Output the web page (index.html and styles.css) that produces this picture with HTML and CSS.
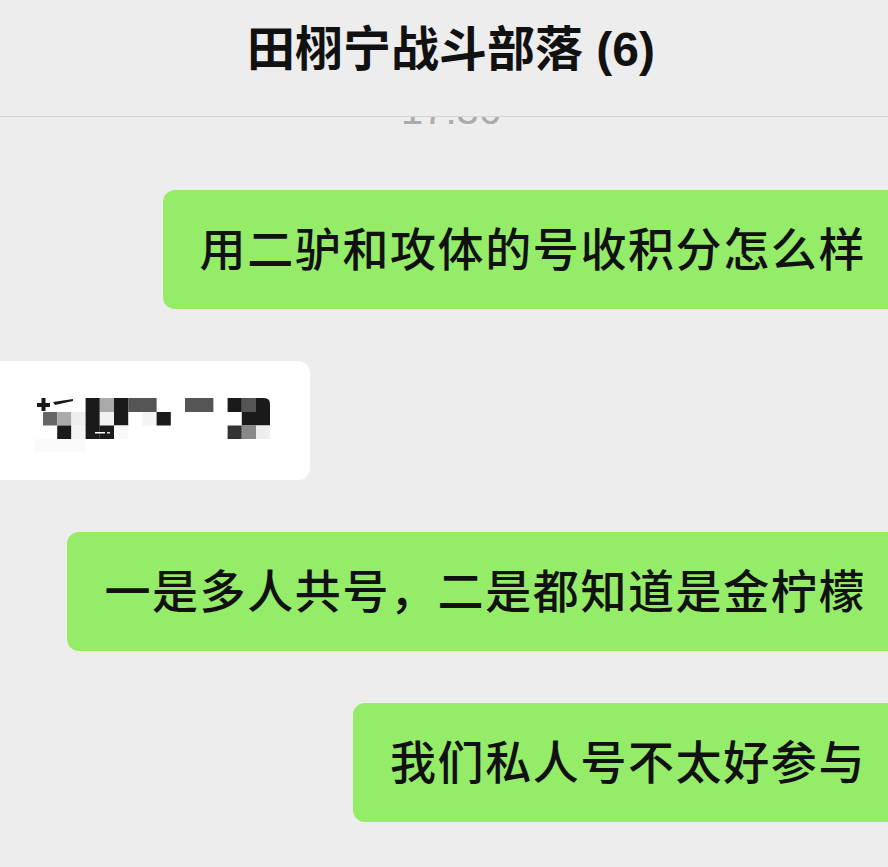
FILE: index.html
```html
<!DOCTYPE html>
<html lang="zh-CN">
  <head>
    <meta charset="UTF-8" />
    <meta name="viewport" content="width=device-width, initial-scale=1.0" />
    <title>田栩宁战斗部落 (6)</title>
    <link rel="stylesheet" href="styles.css">
  </head>
  <body>
    <header class="topbar">
      <h1 class="title">田栩宁战斗部落 (6)</h1>
    </header>

    <div class="chat">
      <!-- timestamp scrolled up under the top bar -->
      <div class="time"><span>17:36</span></div>

      <div class="row me">
        <div class="bubble green">用二驴和攻体的号收积分怎么样</div>
      </div>

      <div class="row other">
        <div class="bubble white">
          <!-- mosaic over the hidden message -->
          <svg class="mosaic" width="240" height="60" viewBox="0 0 240 60">
            <rect x="2" y="8" width="13" height="4" fill="#1a1a1a" />
            <rect x="6.5" y="3" width="4" height="13" fill="#1a1a1a" />
            <path d="M18 7 L38 4 L38 6 L20 10 Z" fill="#1a1a1a" />
            <rect x="8" y="17" width="14.2" height="13.5" fill="#666" />
            <rect x="22.2" y="17" width="14.2" height="13.5" fill="#aaa" />
            <rect x="36.4" y="17" width="14.2" height="13.5" fill="#eee" />
            <rect x="22.2" y="30.5" width="14.2" height="13.5" fill="#1a1a1a" />
            <rect x="36.4" y="30.5" width="14.2" height="13.5" fill="#f4f4f4" />
            <rect x="50.6" y="3" width="14.2" height="41" fill="#1a1a1a" />
            <rect x="64.8" y="3" width="14.2" height="14" fill="#aaa" />
            <rect x="64.8" y="17" width="14.2" height="13.5" fill="#f2f2f2" />
            <rect x="64.8" y="30.5" width="14.2" height="13.5" fill="#1a1a1a" />
            <rect x="60" y="37" width="10" height="1.5" fill="#fff" />
            <rect x="72" y="37" width="3" height="1.5" fill="#ddd" />
            <rect x="79" y="3" width="14.2" height="27.5" fill="#1a1a1a" />
            <rect x="79" y="30.5" width="14.2" height="13.5" fill="#f8f8f8" />
            <rect x="93.2" y="3" width="28.4" height="14" fill="#555" />
            <rect x="107.4" y="17" width="14.2" height="13.5" fill="#f4f4f4" />
            <rect x="121.6" y="17" width="14.2" height="13.5" fill="#1a1a1a" />
            <rect x="150" y="3" width="28.4" height="14" fill="#555" />
            <rect x="192.6" y="3" width="14.2" height="14" fill="#1a1a1a" />
            <rect x="206.8" y="3" width="14.2" height="14" fill="#555" />
            <path d="M221 3 H229 Q235 3 235 9 V30.5 H221 Z" fill="#1a1a1a" />
            <rect x="206.8" y="17" width="14.2" height="13.5" fill="#1a1a1a" />
            <rect x="192.6" y="30.5" width="14.2" height="13.5" fill="#333" />
            <rect x="206.8" y="30.5" width="14.2" height="13.5" fill="#888" />
            <rect x="221" y="30.5" width="14.2" height="13.5" fill="#eee" />
            <rect x="0" y="44" width="50" height="13" fill="#fafafa" />
          </svg>
        </div>
      </div>

      <div class="row me">
        <div class="bubble green">一是多人共号，二是都知道是金柠檬</div>
      </div>

      <div class="row me">
        <div class="bubble green">我们私人号不太好参与</div>
      </div>
    </div>
  </body>
</html>
```

FILE: styles.css
```css
html,
body {
  margin: 0;
  padding: 0;
  overflow: hidden;
}

body {
  background-color: #ededed;
  font-family: "Liberation Sans", "Noto Sans CJK SC", sans-serif;
  color: #111;
}

.topbar {
  height: 117px;
  border-bottom: 1px solid #d4d4d4;
  box-sizing: border-box;
  background-color: #ededed;
}

.title {
  margin: 0;
  padding: 20px 0 0 14px;
  text-align: center;
  font-size: 48px;
  line-height: 60px;
  font-weight: bold;
  color: #111;
}

.chat {
  margin: 0 -24px;
}

.time {
  height: 8px;
  padding-left: 14px;
  overflow: hidden;
  display: flex;
  align-items: flex-end;
  justify-content: center;
}

.time span {
  font-size: 40px;
  line-height: 30px;
  color: #ababab;
}

.row {
  display: flex;
  margin-top: 52px;
}

.row:nth-child(2) {
  margin-top: 65px;
}

.row.me {
  justify-content: flex-end;
}

.row.other {
  justify-content: flex-start;
}

.bubble {
  border-radius: 12px;
  font-size: 46px;
  line-height: 58px;
  letter-spacing: 1.6px;
  font-weight: 500;
}

.bubble.green {
  background-color: #95ec69;
  padding: 31px 46px 30px 37px;
}

.bubble.white {
  background-color: #fff;
  padding: 34px 35px 25px 59px;
}

.mosaic {
  display: block;
}
```
